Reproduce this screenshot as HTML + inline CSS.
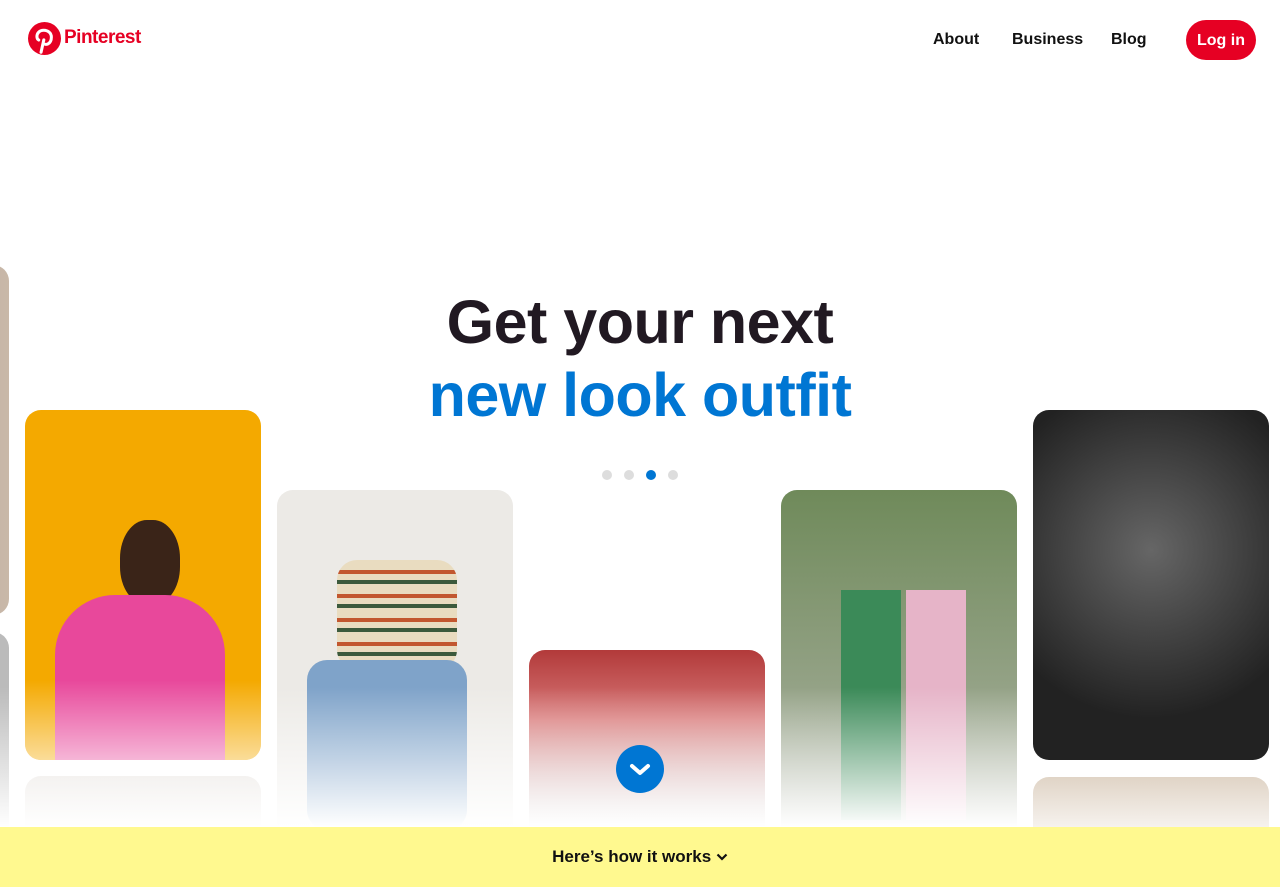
<!DOCTYPE html>
<html><head><meta charset="utf-8"><style>
*{margin:0;padding:0;box-sizing:border-box}
html,body{width:1280px;height:887px;overflow:hidden}
body{background:#fff;font-family:"Liberation Sans",sans-serif;position:relative}
.nav a{position:absolute;top:31px;font-weight:bold;font-size:16px;color:#111;text-decoration:none}
.card{position:absolute;width:236px;border-radius:16px;overflow:hidden}
.fade::after{content:"";position:absolute;left:0;right:0;bottom:0;height:140px;background:linear-gradient(rgba(255,255,255,0),#fff)}
h1{position:absolute;left:0;width:1280px;text-align:center;font-size:61px;font-weight:bold;line-height:74px}
.dot{position:absolute;top:470px;width:10px;height:10px;border-radius:50%;background:#ddd}
</style></head><body>
<svg style="position:absolute;left:28px;top:22px" width="33" height="33" viewBox="0 0 24 24"><circle cx="12" cy="12" r="12" fill="#e60023"/><path d="M9.5 22 L11.5 13 M11 15.5c1.5 1.5 6 1 6-4.5 0-3-2.5-5-5.5-5C8 6 6.5 8.5 6.5 10.5c0 1.2.5 2.2 1.3 2.6" stroke="#fff" stroke-width="2.2" fill="none" stroke-linecap="round"/></svg>
<div style="position:absolute;left:64px;top:27px;font-size:19px;font-weight:bold;color:#e60023;letter-spacing:-0.5px">Pinterest</div>
<div class="nav"><a style="left:933px">About</a><a style="left:1012px">Business</a><a style="left:1111px">Blog</a></div>
<div style="position:absolute;left:1186px;top:20px;width:70px;height:40px;border-radius:20px;background:#e60023;color:#fff;font-weight:bold;font-size:16px;text-align:center;line-height:41px">Log in</div>
<h1 style="top:285px;color:#211922;letter-spacing:-0.5px">Get your next</h1>
<h1 style="top:358px;color:#0076d3;letter-spacing:-0.5px">new look outfit</h1>
<div class="dot" style="left:602px"></div><div class="dot" style="left:624px"></div><div class="dot" style="left:646px;background:#0076d3"></div><div class="dot" style="left:668px"></div>
<div class="card" style="left:-227px;top:265px;height:350px;background:linear-gradient(90deg,#9a9a9a,#c9b8a8)"></div>
<div class="card fade" style="left:-227px;top:632px;height:195px;border-radius:16px 16px 0 0;background:#bbb"></div>
<div class="card" style="left:25px;top:410px;height:350px;background:#f4a900">
<div style="position:absolute;left:95px;top:110px;width:60px;height:85px;border-radius:45%;background:#3a2418"></div>
<div style="position:absolute;left:30px;top:185px;width:170px;height:170px;border-radius:60px 60px 0 0;background:#e8489b"></div>
<div style="position:absolute;left:0;right:0;bottom:0;height:80px;background:linear-gradient(rgba(255,255,255,0),rgba(255,255,255,.6))"></div></div>
<div class="card" style="left:25px;top:776px;height:51px;border-radius:16px 16px 0 0;background:linear-gradient(#f4f2f0,#fff)"></div>
<div class="card fade" style="left:277px;top:490px;height:337px;border-radius:16px 16px 0 0;background:#eceae6">
<div style="position:absolute;left:60px;top:70px;width:120px;height:110px;border-radius:20px;background:repeating-linear-gradient(#e9dcc0 0 10px,#c2572f 10px 14px,#e9dcc0 14px 20px,#3c5a3c 20px 24px)"></div>
<div style="position:absolute;left:30px;top:170px;width:160px;height:170px;border-radius:20px;background:#7fa3c9"></div></div>
<div class="card fade" style="left:529px;top:650px;height:177px;border-radius:16px 16px 0 0;background:linear-gradient(#b23a3a,#d97a7a 40%,#ccc)"></div>
<div class="card fade" style="left:781px;top:490px;height:337px;border-radius:16px 16px 0 0;background:linear-gradient(#6f8a5a,#aeb3a5)">
<div style="position:absolute;left:60px;top:100px;width:60px;height:230px;background:#3b8a58"></div>
<div style="position:absolute;left:125px;top:100px;width:60px;height:230px;background:#e6b4c8"></div></div>
<div class="card" style="left:1033px;top:410px;height:350px;background:radial-gradient(circle at 50% 40%,#666,#222 70%)"></div>
<div class="card" style="left:1033px;top:777px;height:50px;border-radius:16px 16px 0 0;background:linear-gradient(#e0d4c6,#f6f2ee)"></div>
<div style="position:absolute;left:616px;top:745px;width:48px;height:48px;border-radius:50%;background:#0076d3"><svg width="48" height="48" viewBox="0 0 48 48"><path d="M16 21l8 7 8-7" stroke="#fff" stroke-width="4" fill="none" stroke-linecap="round" stroke-linejoin="round"/></svg></div>
<div style="position:absolute;left:0;top:827px;width:1280px;height:60px;background:#fff98f;text-align:center;line-height:60px;font-weight:bold;font-size:17px;color:#111">Here’s how it works <svg width="12" height="10" viewBox="0 0 12 10"><path d="M1.5 2.5l4.5 4.5 4.5-4.5" stroke="#111" stroke-width="2.2" fill="none"/></svg></div>
</body></html>
